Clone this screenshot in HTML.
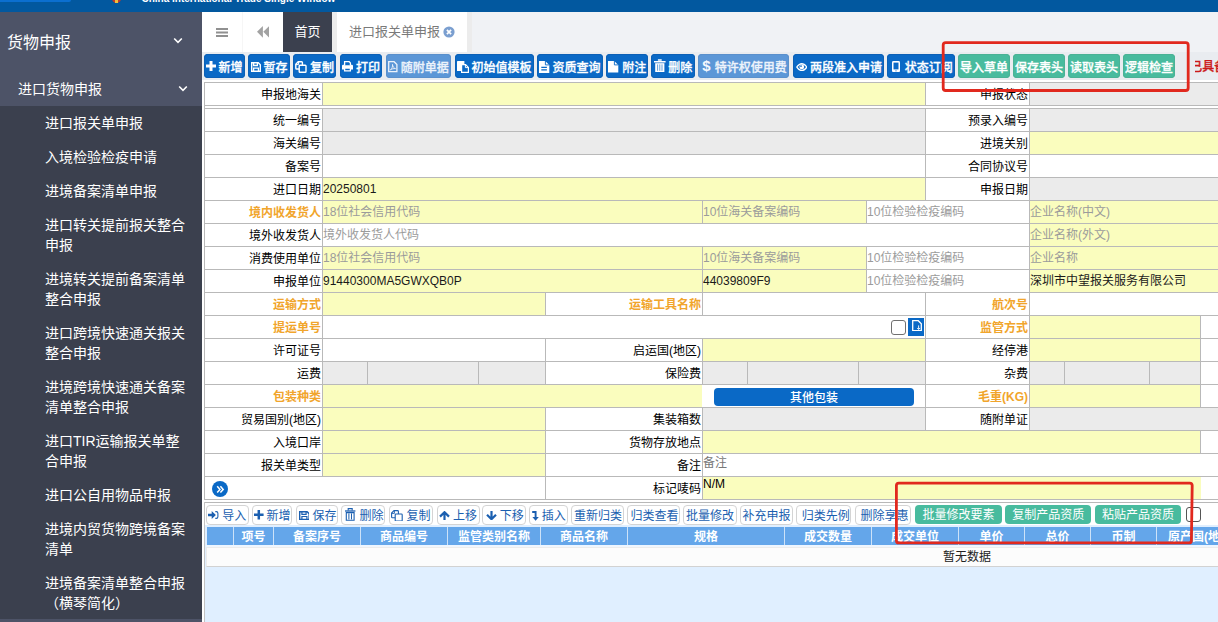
<!DOCTYPE html>
<html lang="zh-CN"><head><meta charset="utf-8"><title>进口报关单申报</title>
<style>
*{box-sizing:border-box;margin:0;padding:0}
html,body{width:1218px;height:622px;overflow:hidden}
body{position:relative;background:#e0efff;font-family:"Liberation Sans","Noto Sans CJK SC",sans-serif;font-size:12px;color:#000}
div,span{position:absolute;white-space:nowrap}
#top{left:0;top:0;width:1218px;height:12px;background:#02589f;overflow:hidden}
#side{left:0;top:12px;width:202px;height:610px;background:#3b404e;color:#fff;font-size:14px;line-height:20px}
#side .h{left:0;top:0;width:202px;height:94px;background:#4d5367}
#side .it{left:45px;margin-top:1px}
#tabs{left:202px;top:12px;width:1016px;height:40px;background:#f0f2f5}
#tbar{left:202px;top:52px;width:1016px;height:28px;background:#e9ecf0}
#fbg{left:202px;top:80px;width:1016px;height:445px;background:#fff}
.b{top:54px;height:24px;background:#0a69c6;box-shadow:inset 0 0 0 1px #0c60b6;border-radius:4px;color:#fff;font-weight:500;-webkit-text-stroke:0.3px;line-height:24px;font-size:12px}
.b.d{background:#5c97d7;color:#edf3fb;box-shadow:inset 0 0 0 1px #5a90cc}
.b.g{background:#48bb9e;box-shadow:inset 0 0 0 1px #4ab295;color:#fff;text-align:center;line-height:28px;overflow:hidden}
.b span{top:2px}
.fm{background:#b9b9b9}
.c{height:22px;line-height:25px;overflow:hidden}
.l{background:#fff;text-align:right;padding-right:1px}
.o{color:#f1a52c;font-weight:bold}
.ph{color:#999}
.p{color:#9b9b9b;padding-left:0;line-height:23px}
.v{padding-left:0;line-height:23px;color:#1a1a1a}
.pb{top:505px;height:19.6px;background:#fff;border:1px solid #d4d4d4;border-radius:4px;color:#1b5fb0;line-height:18px;font-size:12px}
.gh{top:527px;height:18px;background:#64a6ea;color:#fff;font-weight:bold;text-align:center;line-height:21px;font-size:12px;overflow:hidden}
.red{border:3px solid #e0281e;border-radius:4px}
svg{position:absolute}
</style></head>
<body>
<div id="top">
<div style="left:0;top:0;width:71px;height:2px;background:#0b6fd0;border-radius:0 0 4px 0"></div>
<div style="left:112px;top:-3px;width:9px;height:6px;background:#c0392b;border-radius:0 0 5px 5px"></div>
<div style="left:115px;top:0;width:3px;height:3px;background:#f3c13a"></div>
<div style="left:141.5px;top:-7.4px;font:bold 10px/12px 'Liberation Sans',sans-serif;color:#fff">China International Trade Single Window</div>
</div>
<div id="side">
<div class="h"></div><div style="left:0;top:607px;width:202px;height:3px;background:#4d5367"></div>
<div style="left:7px;top:21px;font-size:16px;line-height:20px">货物申报</div>
<svg style="left:173px;top:25px" width="10" height="8" viewBox="0 0 10 8"><path d="M1.2 1.5 L5 5.3 L8.8 1.5" fill="none" stroke="#fff" stroke-width="1.6"/></svg>
<div style="left:18px;top:67px">进口货物申报</div>
<svg style="left:178px;top:73px" width="10" height="8" viewBox="0 0 10 8"><path d="M1.2 1.5 L5 5.3 L8.8 1.5" fill="none" stroke="#fff" stroke-width="1.6"/></svg>
<div class="it" style="top:100px">进口报关单申报</div>
<div class="it" style="top:134px">入境检验检疫申请</div>
<div class="it" style="top:168px">进境备案清单申报</div>
<div class="it" style="top:202px">进口转关提前报关整合<br>申报</div>
<div class="it" style="top:256px">进境转关提前备案清单<br>整合申报</div>
<div class="it" style="top:310px">进口跨境快速通关报关<br>整合申报</div>
<div class="it" style="top:364px">进境跨境快速通关备案<br>清单整合申报</div>
<div class="it" style="top:418px">进口TIR运输报关单整<br>合申报</div>
<div class="it" style="top:472px">进口公自用物品申报</div>
<div class="it" style="top:506px">进境内贸货物跨境备案<br>清单</div>
<div class="it" style="top:560px">进境备案清单整合申报<br>（横琴简化）</div>
</div>
<div id="tabs">
<div style="left:0;top:0;width:81px;height:40px;background:#fff"></div>
<div style="left:40px;top:0;width:1px;height:40px;background:#f6f6f6"></div><div style="left:130px;top:0;width:5px;height:40px;background:#ececec"></div>
<svg style="left:14.1px;top:15.8px" width="12" height="9.2" viewBox="0 0 12 9.2"><path d="M0 1.1h12M0 4.6h12M0 8.1h12" stroke="#909090" stroke-width="2"/></svg>
<svg style="left:55.1px;top:14.4px" width="12.2" height="11.7" viewBox="0 0 12.2 11.7"><path d="M5.9 0L0 5.85L5.9 11.7Z M12.2 0L6.3 5.85L12.2 11.7Z" fill="#a2a2a2"/></svg>
<div style="left:81px;top:0;width:49px;height:40px;background:#3b404e;color:#fff;font-size:13px;line-height:40px;text-align:center">首页</div>
<div style="left:265px;top:0;width:5px;height:40px;background:#ececec"></div>
<div style="left:135px;top:0;width:130px;height:40px;background:#fff;color:#7a7a7a;font-size:13px;line-height:40px;padding-left:12px">进口报关单申报</div>
<svg style="left:241px;top:14px" width="12" height="12" viewBox="0 0 12 12"><circle cx="6" cy="6" r="5.6" fill="#7b9fd0"/><path d="M3.9 3.9L8.1 8.1M8.1 3.9L3.9 8.1" stroke="#fff" stroke-width="1.7"/></svg>
</div>
<div id="tbar"></div><div id="fbg"></div>
<div class="b " style="left:204px;width:41px"><span style="left:14.6px">新增</span></div>
<svg style="left:205.6px;top:61.1px" width="10" height="10" viewBox="0 0 10 10"><path d="M5 0v10M0 5h10" stroke="#fff" stroke-width="3"/></svg>
<div class="b " style="left:248px;width:42px"><span style="left:15.4px">暂存</span></div>
<svg style="left:250.6px;top:61.8px" width="10" height="10" viewBox="0 0 10 10"><path d="M0.7 0.7h6.6l2 2v6.6H0.7z" fill="none" stroke="#fff" stroke-width="1.4"/><path d="M2.6 0.7v2.8h3.8v-2.8M2.6 9.3v-3.2h4.8v3.2" fill="none" stroke="#fff" stroke-width="1.3"/></svg>
<div class="b " style="left:293px;width:43px"><span style="left:17px">复制</span></div>
<svg style="left:295.3px;top:60.9px" width="12" height="12" viewBox="0 0 12 12"><path d="M5 4.3h5.2q0.8 0 0.8 0.8v5.4q0 0.8-0.8 0.8H5q-0.8 0-0.8-0.8V5.1q0-0.8 0.8-0.8z" fill="none" stroke="#fff" stroke-width="1.4"/><path d="M4.2 8H1.6q-0.8 0-0.8-0.8V3.2L3.2 0.8h3.4q0.8 0 0.8 0.8v2.7" fill="none" stroke="#fff" stroke-width="1.4"/><path d="M0.9 3.6h2.7V0.9" fill="none" stroke="#fff" stroke-width="1"/></svg>
<div class="b " style="left:340px;width:42px"><span style="left:16px">打印</span></div>
<svg style="left:342px;top:61.2px" width="11" height="10.4" viewBox="0 0 11 10.4"><path d="M0 5q0-1.2 1.2-1.2h8.6q1.2 0 1.2 1.2v3.4H0z" fill="#fff"/><path d="M2.6 4.2v-3.5h4.6l1.2 1.2v2.3M2.6 7h5.8v2.8H2.6z" fill="#0a69c6" stroke="#fff" stroke-width="1.3"/></svg>
<div class="b d" style="left:386px;width:65px"><span style="left:14.8px">随附单据</span></div>
<svg style="left:388.2px;top:61.2px" width="9.6" height="11.4" viewBox="0 0 9.6 11.4"><path d="M0.7 0.7h5.4l2.8 2.8v7.2H0.7z" fill="none" stroke="#edf3fb" stroke-width="1.3"/><path d="M2.4 9c1.8-1.4 2.3-3.6 2.1-5.6 .2 2.3 1.4 3.8 3 4.2-1.9-.2-3.7.3-5.1 1.4z" fill="none" stroke="#edf3fb" stroke-width="0.9"/></svg>
<div class="b " style="left:455px;width:79px"><span style="left:16.6px">初始值模板</span></div>
<svg style="left:457.2px;top:60.6px" width="12" height="12" viewBox="0 0 12 12"><path d="M0 0.6q0-.6.6-.6h6.2q.6 0 .6.6v9.4H0z" fill="#fff"/><path d="M4.6 3.6h4l2.8 2.8v5H4.6z" fill="#0a69c6" stroke="#fff" stroke-width="1.2"/><path d="M8.4 3.8v2.8h2.8" fill="none" stroke="#fff" stroke-width="1"/></svg>
<div class="b " style="left:537px;width:65.5px"><span style="left:15.6px">资质查询</span></div>
<svg style="left:539.4px;top:60.6px" width="10.3" height="12" viewBox="0 0 10.3 12"><path d="M0 0h6.2l4.1 4.1v7.9H0z" fill="#fff"/><path d="M2.3 6.4h5.6M2.3 8.9h5.6" stroke="#0a69c6" stroke-width="1.2"/><path d="M6.4 0v3.9h3.9" fill="none" stroke="#0a69c6" stroke-width="0.9"/></svg>
<div class="b " style="left:606px;width:41.5px"><span style="left:16.3px">附注</span></div>
<svg style="left:608.4px;top:61px" width="10.3" height="11.6" viewBox="0 0 10.3 11.6"><path d="M0 0h6.2l4.1 4.1v7.5H0z" fill="#fff"/><path d="M6.4 0v3.9h3.9" fill="none" stroke="#0a69c6" stroke-width="0.9"/></svg>
<div class="b " style="left:651px;width:44px"><span style="left:17.2px">删除</span></div>
<svg style="left:654.4px;top:58.9px" width="11.6" height="13" viewBox="0 0 11.6 13"><path d="M0 2.7h11.6M3.9 1h3.8" stroke="#fff" stroke-width="1.5"/><path d="M1.2 4.2h9.2v8.8H1.2z" fill="#fff"/><path d="M3.6 5.4v6.4M5.8 5.4v6.4M8 5.4v6.4" stroke="#0a69c6" stroke-width="0.8" opacity="0.8"/></svg>
<div class="b d" style="left:698px;width:90.6px"><span style="left:16.8px">特许权使用费</span></div>
<div style="left:702.2px;top:54px;font:bold 15px/24px 'Liberation Sans',sans-serif;color:#f4f8fd">$</div>
<div class="b " style="left:793px;width:91px"><span style="left:17px">两段准入申请</span></div>
<svg style="left:795.5px;top:62.9px" width="11.6" height="8.2" viewBox="0 0 11.6 8.2"><path d="M0 4.1C1.8 1.2 3.9 0 5.8 0S9.8 1.2 11.6 4.1C9.8 7 7.7 8.2 5.8 8.2S1.8 7 0 4.1z" fill="#fff"/><path d="M1.6 4.1C3 2.2 4.3 1.5 5.8 1.5S8.6 2.2 10 4.1C8.6 6 7.3 6.7 5.8 6.7S3 6 1.6 4.1z" fill="#0a69c6"/><circle cx="5.8" cy="3.9" r="2.4" fill="#fff"/><circle cx="5" cy="3.1" r="0.9" fill="#0a69c6"/></svg>
<div class="b " style="left:887px;width:68px"><span style="left:17.8px">状态订阅</span></div>
<svg style="left:891.5px;top:61px" width="8" height="11.2" viewBox="0 0 8 11.2"><rect x="0" y="0" width="8" height="11.2" rx="1.5" fill="#fff"/><rect x="1.5" y="1.6" width="5" height="6.8" fill="#0a69c6"/><circle cx="4" cy="9.8" r="0.6" fill="#0a69c6"/></svg>
<div class="b g" style="left:958px;width:52px">导入草单</div>
<div class="b g" style="left:1013px;width:52px">保存表头</div>
<div class="b g" style="left:1068px;width:52px">读取表头</div>
<div class="b g" style="left:1123px;width:52px">逻辑检查</div>
<div style="left:1194.5px;top:54px;width:24px;height:24px;overflow:hidden"><div style="left:-4.2px;top:1px;line-height:24px;font-size:12px;font-weight:500;-webkit-text-stroke:0.3px;color:#cb1a1a">已具备</div></div>
<div class="fm" style="left:204px;top:82px;width:1014px;height:24px"></div>
<div class="fm" style="left:204px;top:108px;width:1014px;height:392px"></div><div class="fm" style="left:204px;top:82px;width:1px;height:418px"></div>
<div class="c l" style="left:205px;top:83px;width:117px;background:#ffffff">申报地海关</div>
<div class="c " style="left:323px;top:83px;width:602px;background:#fafdbe"></div>
<div class="c l" style="left:926px;top:83px;width:103px;background:#ffffff">申报状态</div>
<div class="c " style="left:1030px;top:83px;width:189px;background:#ebebeb"></div>
<div class="c l" style="left:205px;top:109px;width:117px;background:#ffffff">统一编号</div>
<div class="c " style="left:323px;top:109px;width:602px;background:#ebebeb"></div>
<div class="c l" style="left:926px;top:109px;width:103px;background:#ffffff">预录入编号</div>
<div class="c " style="left:1030px;top:109px;width:189px;background:#ebebeb"></div>
<div class="c l" style="left:205px;top:132px;width:117px;background:#ffffff">海关编号</div>
<div class="c " style="left:323px;top:132px;width:602px;background:#ebebeb"></div>
<div class="c l" style="left:926px;top:132px;width:103px;background:#ffffff">进境关别</div>
<div class="c " style="left:1030px;top:132px;width:189px;background:#fafdbe"></div>
<div class="c l" style="left:205px;top:155px;width:117px;background:#ffffff">备案号</div>
<div class="c " style="left:323px;top:155px;width:602px;background:#ffffff"></div>
<div class="c l" style="left:926px;top:155px;width:103px;background:#ffffff">合同协议号</div>
<div class="c " style="left:1030px;top:155px;width:189px;background:#ffffff"></div>
<div class="c l" style="left:205px;top:178px;width:117px;background:#ffffff">进口日期</div>
<div class="c v" style="left:323px;top:178px;width:602px;background:#fafdbe">20250801</div>
<div class="c l" style="left:926px;top:178px;width:103px;background:#ffffff">申报日期</div>
<div class="c " style="left:1030px;top:178px;width:189px;background:#ebebeb"></div>
<div class="c l o" style="left:205px;top:201px;width:117px;background:#ffffff">境内收发货人</div>
<div class="c p" style="left:323px;top:201px;width:379px;background:#fafdbe">18位社会信用代码</div>
<div class="c p" style="left:703px;top:201px;width:163px;background:#fafdbe">10位海关备案编码</div>
<div class="c p" style="left:867px;top:201px;width:162px;background:#ffffff">10位检验检疫编码</div>
<div class="c p" style="left:1030px;top:201px;width:189px;background:#fafdbe">企业名称(中文)</div>
<div class="c l" style="left:205px;top:224px;width:117px;background:#ffffff">境外收发货人</div>
<div class="c p" style="left:323px;top:224px;width:706px;background:#ffffff">境外收发货人代码</div>
<div class="c p" style="left:1030px;top:224px;width:189px;background:#fafdbe">企业名称(外文)</div>
<div class="c l" style="left:205px;top:247px;width:117px;background:#ffffff">消费使用单位</div>
<div class="c p" style="left:323px;top:247px;width:379px;background:#fafdbe">18位社会信用代码</div>
<div class="c p" style="left:703px;top:247px;width:163px;background:#fafdbe">10位海关备案编码</div>
<div class="c p" style="left:867px;top:247px;width:162px;background:#ffffff">10位检验检疫编码</div>
<div class="c p" style="left:1030px;top:247px;width:189px;background:#fafdbe">企业名称</div>
<div class="c l" style="left:205px;top:270px;width:117px;background:#ffffff">申报单位</div>
<div class="c v" style="left:323px;top:270px;width:379px;background:#fafdbe">91440300MA5GWXQB0P</div>
<div class="c v" style="left:703px;top:270px;width:163px;background:#fafdbe">44039809F9</div>
<div class="c p" style="left:867px;top:270px;width:162px;background:#ffffff">10位检验检疫编码</div>
<div class="c v" style="left:1030px;top:270px;width:189px;background:#fafdbe">深圳市中望报关服务有限公司</div>
<div class="c l o" style="left:205px;top:293px;width:117px;background:#ffffff">运输方式</div>
<div class="c " style="left:323px;top:293px;width:222px;background:#fafdbe"></div>
<div class="c l o" style="left:546px;top:293px;width:156px;background:#ffffff">运输工具名称</div>
<div class="c " style="left:703px;top:293px;width:222px;background:#ffffff"></div>
<div class="c l o" style="left:926px;top:293px;width:103px;background:#ffffff">航次号</div>
<div class="c " style="left:1030px;top:293px;width:189px;background:#ffffff"></div>
<div class="c l o" style="left:205px;top:316px;width:117px;background:#ffffff">提运单号</div>
<div class="c " style="left:323px;top:316px;width:602px;background:#ffffff"></div>
<div class="c l o" style="left:926px;top:316px;width:103px;background:#ffffff">监管方式</div>
<div class="c " style="left:1030px;top:316px;width:170px;background:#fafdbe"></div>
<div class="c " style="left:1201px;top:316px;width:18px;background:#ffffff"></div>
<div class="c l" style="left:205px;top:339px;width:117px;background:#ffffff">许可证号</div>
<div class="c " style="left:323px;top:339px;width:222px;background:#ffffff"></div>
<div class="c l" style="left:546px;top:339px;width:156px;background:#ffffff">启运国(地区)</div>
<div class="c " style="left:703px;top:339px;width:222px;background:#fafdbe"></div>
<div class="c l" style="left:926px;top:339px;width:103px;background:#ffffff">经停港</div>
<div class="c " style="left:1030px;top:339px;width:170px;background:#fafdbe"></div>
<div class="c " style="left:1201px;top:339px;width:18px;background:#ffffff"></div>
<div class="c l" style="left:205px;top:362px;width:117px;background:#ffffff">运费</div>
<div class="c " style="left:323px;top:362px;width:44px;background:#ebebeb"></div>
<div class="c " style="left:368px;top:362px;width:110px;background:#ebebeb"></div>
<div class="c " style="left:479px;top:362px;width:66px;background:#ebebeb"></div>
<div class="c l" style="left:546px;top:362px;width:156px;background:#ffffff">保险费</div>
<div class="c " style="left:703px;top:362px;width:44px;background:#ebebeb"></div>
<div class="c " style="left:748px;top:362px;width:110px;background:#ebebeb"></div>
<div class="c " style="left:859px;top:362px;width:66px;background:#ebebeb"></div>
<div class="c l" style="left:926px;top:362px;width:103px;background:#ffffff">杂费</div>
<div class="c " style="left:1030px;top:362px;width:34px;background:#ebebeb"></div>
<div class="c " style="left:1065px;top:362px;width:84px;background:#ebebeb"></div>
<div class="c " style="left:1150px;top:362px;width:50px;background:#ebebeb"></div>
<div class="c " style="left:1201px;top:362px;width:18px;background:#ffffff"></div>
<div class="c l o" style="left:205px;top:385px;width:117px;background:#ffffff">包装种类</div>
<div class="c " style="left:323px;top:385px;width:379px;background:#fafdbe"></div>
<div class="c " style="left:702px;top:385px;width:223px;background:#ffffff"></div>
<div class="c l o" style="left:926px;top:385px;width:103px;background:#ffffff">毛重(KG)</div>
<div class="c " style="left:1030px;top:385px;width:170px;background:#fafdbe"></div>
<div class="c " style="left:1201px;top:385px;width:18px;background:#ffffff"></div>
<div style="left:714px;top:388px;width:200px;height:18px;background:#0a69c6;border-radius:4px;color:#fff;text-align:center;line-height:20px;font-size:12px;font-weight:500;overflow:hidden">其他包装</div>
<div class="c l" style="left:205px;top:408px;width:117px;background:#ffffff">贸易国别(地区)</div>
<div class="c " style="left:323px;top:408px;width:222px;background:#fafdbe"></div>
<div class="c l" style="left:546px;top:408px;width:156px;background:#ffffff">集装箱数</div>
<div class="c " style="left:703px;top:408px;width:222px;background:#ebebeb"></div>
<div class="c l" style="left:926px;top:408px;width:103px;background:#ffffff">随附单证</div>
<div class="c " style="left:1030px;top:408px;width:189px;background:#ebebeb"></div>
<div class="c l" style="left:205px;top:431px;width:117px;background:#ffffff">入境口岸</div>
<div class="c " style="left:323px;top:431px;width:222px;background:#fafdbe"></div>
<div class="c l" style="left:546px;top:431px;width:156px;background:#ffffff">货物存放地点</div>
<div class="c " style="left:703px;top:431px;width:497px;background:#fafdbe"></div>
<div class="c " style="left:1201px;top:431px;width:18px;background:#ffffff"></div>
<div class="c l" style="left:205px;top:454px;width:117px;background:#ffffff">报关单类型</div>
<div class="c " style="left:323px;top:454px;width:222px;background:#fafdbe"></div>
<div class="c l" style="left:546px;top:454px;width:156px;background:#ffffff">备注</div>
<div class="c " style="left:703px;top:454px;width:516px;background:#ffffff"></div>
<div style="left:703px;top:456px;color:#777;font-size:12px;line-height:14px">备注</div>
<div class="c " style="left:205px;top:477px;width:340px;background:#ffffff"></div>
<div class="c l" style="left:546px;top:477px;width:156px;background:#ffffff">标记唛码</div>
<div class="c " style="left:703px;top:477px;width:498px;background:#fafdbe"></div>
<div class="c " style="left:1201px;top:477px;width:18px;background:#ffffff"></div>
<div style="left:703px;top:477px;font-size:12px;line-height:14px">N/M</div>
<svg style="left:212px;top:481px" width="16" height="16" viewBox="0 0 16 16"><circle cx="8" cy="8" r="8" fill="#0a69c6"/><path d="M5.2 5.2L8 8.4L5.2 11.6M8.4 5.2L11.2 8.4L8.4 11.6" fill="none" stroke="#fff" stroke-width="1.5"/></svg>
<div style="left:891px;top:320px;width:15px;height:15px;background:#fff;border:1px solid #707070;border-radius:3px"></div>
<div style="left:908.3px;top:318px;width:15.4px;height:17.8px;background:#0a69c6"></div>
<svg style="left:911.8px;top:319.7px" width="10" height="11.4" viewBox="0 0 10 11.4"><path d="M0.7 0.7h5.6l3 3v7H0.7z" fill="none" stroke="#fff" stroke-width="1.3"/><path d="M6.6 5.4v3.8M5.2 8l1.4 1.5l1.4-1.5" fill="none" stroke="#fff" stroke-width="0.9"/></svg>
<div style="left:202px;top:525px;width:2px;height:97px;background:#fff"></div>
<div style="left:204px;top:502px;width:1014px;height:1px;background:#b8b8b8"></div>
<div style="left:204px;top:502px;width:1px;height:120px;background:#c2c2c2"></div>
<div class="pb" style="left:205.5px;width:43px"><span style="left:15.7px;top:1px">导入</span></div>
<svg style="left:208.2px;top:511px" width="10.4" height="8" viewBox="0 0 10.4 8"><path d="M0 2.7h3.7V0L7.9 4L3.7 8V5.3H0z" fill="#1b5fb0"/><path d="M7.3 0.6h0.9q1.7 0 1.7 1.7v3.4q0 1.7-1.7 1.7H7.3" fill="none" stroke="#1b5fb0" stroke-width="1.1"/></svg>
<div class="pb" style="left:251.8px;width:40.7px"><span style="left:13.6px;top:1px">新增</span></div>
<svg style="left:254.4px;top:510.2px" width="9.6" height="9.4" viewBox="0 0 9.6 9.4"><path d="M4.8 0v9.4M0 4.7h9.6" stroke="#1b5fb0" stroke-width="2.5"/></svg>
<div class="pb" style="left:295.5px;width:42.3px"><span style="left:15.9px;top:1px">保存</span></div>
<svg style="left:298.6px;top:510.6px" width="10.8" height="9.2" viewBox="0 0 10.8 9.2"><path d="M0.7 0.7h7.4l2 2v5.8H0.7z" fill="none" stroke="#1b5fb0" stroke-width="1.4"/><path d="M2.9 0.7v2.7h4.2v-2.7M2.9 8.5v-3h5v3" fill="none" stroke="#1b5fb0" stroke-width="1.2"/></svg>
<div class="pb" style="left:341.3px;width:44.2px"><span style="left:17.1px;top:1px">删除</span></div>
<svg style="left:345.4px;top:508px" width="10.4" height="12.8" viewBox="0 0 10.4 12.8"><path d="M0 3h10.4" stroke="#1b5fb0" stroke-width="1.3"/><path d="M3.2 2.6V0.6h4v2" fill="none" stroke="#1b5fb0" stroke-width="1.1"/><path d="M1.3 4.6h7.8v7.6H1.3z" fill="none" stroke="#1b5fb0" stroke-width="1.1"/><path d="M3.9 5.4v6M6.5 5.4v6" stroke="#1b5fb0" stroke-width="1"/></svg>
<div class="pb" style="left:388.5px;width:44.8px"><span style="left:17.1px;top:1px">复制</span></div>
<svg style="left:391.4px;top:509.8px" width="12" height="11.6" viewBox="0 0 12 11.6"><path d="M5 4h5.4q0.8 0 0.8 0.8v5.4q0 0.8-0.8 0.8H5q-0.8 0-0.8-0.8V4.8q0-0.8 0.8-0.8z" fill="none" stroke="#1b5fb0" stroke-width="1.1"/><path d="M4.2 7.8H1.4q-0.8 0-0.8-0.8V3L3 0.6h3.6q0.8 0 0.8 0.8V4" fill="none" stroke="#1b5fb0" stroke-width="1.1"/><path d="M0.8 3.4h2.6V0.8" fill="none" stroke="#1b5fb0" stroke-width="0.9"/></svg>
<div class="pb" style="left:436.5px;width:43px"><span style="left:15.5px;top:1px">上移</span></div>
<svg style="left:439px;top:510.8px" width="11" height="9.4" viewBox="0 0 11 9.4"><path d="M5.5 9.4V2M1 5.6L5.5 1.2L10 5.6" fill="none" stroke="#1b5fb0" stroke-width="2.2"/></svg>
<div class="pb" style="left:482.3px;width:44.1px"><span style="left:16.5px;top:1px">下移</span></div>
<svg style="left:485.8px;top:510.6px" width="11" height="9.4" viewBox="0 0 11 9.4"><path d="M5.5 0V7.4M1 3.8L5.5 8.2L10 3.8" fill="none" stroke="#1b5fb0" stroke-width="2.2"/></svg>
<div class="pb" style="left:529.4px;width:39.1px"><span style="left:11.4px;top:1px">插入</span></div>
<svg style="left:532.3px;top:510.9px" width="6.8" height="9.8" viewBox="0 0 6.8 9.8"><path d="M0.2 1h3.4v6.6" fill="none" stroke="#1b5fb0" stroke-width="1.9"/><path d="M0.4 6L3.6 9.8L6.8 6z" fill="#1b5fb0"/></svg>
<div class="pb" style="left:571.4px;width:53px"><span style="left:1.6px;top:1px">重新归类</span></div>
<div class="pb" style="left:627.3px;width:53px"><span style="left:2.2px;top:1px">归类查看</span></div>
<div class="pb" style="left:683.4px;width:53.3px"><span style="left:1.6px;top:1px">批量修改</span></div>
<div class="pb" style="left:739.5px;width:53.2px"><span style="left:1.9px;top:1px">补充申报</span></div>
<div class="pb" style="left:795.7px;width:55.8px"><span style="left:5.1px;top:1px">归类先例</span></div>
<div class="pb" style="left:854.8px;width:56.6px"><span style="left:4.8px;top:1px">删除享惠</span></div>
<div style="left:914.8px;top:505.4px;width:87.2px;height:18.6px;background:#48bb9e;border-radius:4px;color:#fff;text-align:center;line-height:21px;font-size:12px;overflow:hidden">批量修改要素</div>
<div style="left:1005.4px;top:505.4px;width:85.9px;height:18.6px;background:#48bb9e;border-radius:4px;color:#fff;text-align:center;line-height:21px;font-size:12px;overflow:hidden">复制产品资质</div>
<div style="left:1094.7px;top:505.4px;width:86.8px;height:18.6px;background:#48bb9e;border-radius:4px;color:#fff;text-align:center;line-height:21px;font-size:12px;overflow:hidden">粘贴产品资质</div>
<div style="left:1186px;top:507px;width:15px;height:15px;background:#fff;border:1px solid #555;border-radius:3px"></div>
<div style="left:207px;top:527px;width:1011px;height:18px;background:#cde2f8"></div>
<div class="gh" style="left:207px;width:26px"></div>
<div class="gh" style="left:234px;width:39px">项号</div>
<div class="gh" style="left:274px;width:86px">备案序号</div>
<div class="gh" style="left:361px;width:86px">商品编号</div>
<div class="gh" style="left:448px;width:92px">监管类别名称</div>
<div class="gh" style="left:541px;width:86px">商品名称</div>
<div class="gh" style="left:628px;width:156px">规格</div>
<div class="gh" style="left:785px;width:86px">成交数量</div>
<div class="gh" style="left:872px;width:86px">成交单位</div>
<div class="gh" style="left:959px;width:65px">单价</div>
<div class="gh" style="left:1025px;width:65px">总价</div>
<div class="gh" style="left:1091px;width:65px">币制</div>
<div class="gh" style="left:1157px;width:90px">原产国(地区)</div>
<div style="left:206px;top:545px;width:1012px;height:2px;background:#eef6ff"></div><div style="left:206px;top:547px;width:1012px;height:20px;background:#fcfcfc;border:1px solid #ececec;border-bottom-color:#d2d2d2;border-right:0"></div>
<div style="left:943px;top:545px;line-height:24px;font-size:12px;color:#222">暂无数据</div>
<svg style="left:0;top:0" width="1218" height="622" viewBox="0 0 1218 622"><rect x="943.2" y="42.6" width="245" height="47.9" rx="2.5" fill="none" stroke="#e1291e" stroke-width="2.8"/><path d="M898.9 483.1H1189.7Q1192.2 483.1 1192.2 485.6L1191.4 540.4Q1191.4 542.9 1188.9 542.9H898.9Q896.4 542.9 896.4 540.4V485.6Q896.4 483.1 898.9 483.1Z" fill="none" stroke="#e1291e" stroke-width="2.8"/></svg>
</body></html>
